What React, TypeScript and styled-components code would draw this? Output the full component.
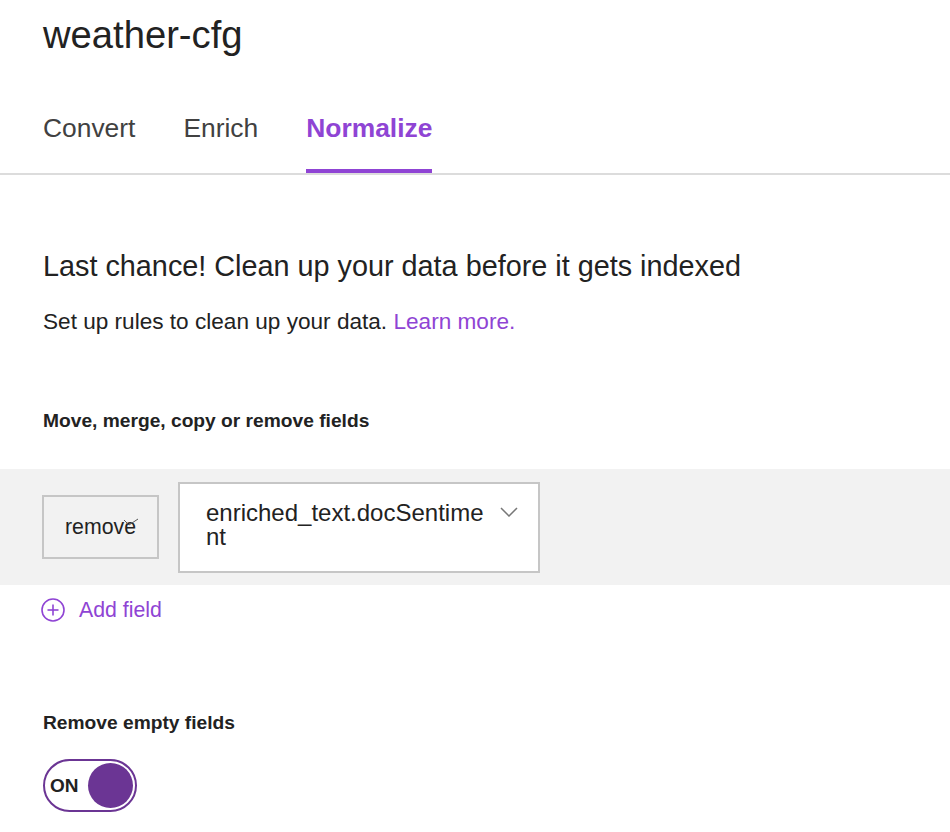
import React from "react";
import styled, { createGlobalStyle } from "styled-components";

const GlobalStyle = createGlobalStyle`
  html, body {
    margin: 0;
    padding: 0;
    background: #ffffff;
    font-family: "Liberation Sans", Arial, Helvetica, sans-serif;
    color: #222222;
  }
  * { box-sizing: border-box; }
`;

const PURPLE = "#8f44d4";
const DARK_PURPLE = "#6b3594";

const Page = styled.div`
  width: 950px;
  min-height: 832px;
  background: #ffffff;
  overflow: hidden;
`;

const Header = styled.header`
  padding: 13px 43px 0;
`;

const Title = styled.h1`
  margin: 0;
  font-size: 38.2px;
  line-height: 44px;
  font-weight: 400;
  color: #222222;
`;

const TabBar = styled.nav`
  display: flex;
  gap: 48px;
  margin-top: 56px;
  padding: 0 43px;
  border-bottom: 2px solid #dcdcdc;
`;

const Tab = styled.div<{ $active?: boolean }>`
  font-size: 26.4px;
  line-height: 30px;
  padding-bottom: 26px;
  border-bottom: 4px solid ${(p) => (p.$active ? PURPLE : "transparent")};
  color: ${(p) => (p.$active ? PURPLE : "#414141")};
  font-weight: ${(p) => (p.$active ? 700 : 400)};
  white-space: nowrap;
`;

const Content = styled.section`
  padding: 0 43px;
`;

const Heading = styled.h2`
  margin: 74px 0 0;
  font-size: 28.8px;
  line-height: 34px;
  font-weight: 400;
  color: #222222;
`;

const Lead = styled.p`
  margin: 25px 0 0;
  font-size: 22.6px;
  line-height: 28px;
  color: #222222;
`;

const Link = styled.a`
  color: ${PURPLE};
  text-decoration: none;
`;

const Label = styled.div<{ $top: number }>`
  margin-top: ${(p) => p.$top}px;
  font-size: 19.2px;
  line-height: 24px;
  font-weight: 700;
  color: #222222;
`;

const RuleBand = styled.div`
  margin-top: 36px;
  height: 116px;
  background: #f2f2f2;
  display: flex;
  align-items: center;
  gap: 19px;
  padding: 0 42px;
`;

const ActionBox = styled.div`
  position: relative;
  width: 117px;
  height: 64px;
  border: 2px solid #c6c6c6;
  background: #f2f2f2;
  display: flex;
  align-items: center;
  justify-content: center;
  font-size: 21.3px;
  color: #222222;
`;

const ActionTick = styled.svg`
  position: absolute;
  left: 79px;
  top: 21px;
`;

const FieldSelect = styled.div`
  width: 362px;
  height: 91px;
  border: 2px solid #c6c6c6;
  background: #ffffff;
  display: flex;
  align-items: flex-start;
  gap: 10px;
  padding: 17px 20px 0 26px;
`;

const FieldText = styled.div`
  width: 284px;
  font-size: 24px;
  line-height: 24px;
  color: #222222;
  word-break: break-all;
`;

const Chevron = styled.svg`
  margin-top: 6px;
  flex: none;
`;

const AddRow = styled.div`
  display: flex;
  align-items: center;
  gap: 14px;
  margin-top: 13px;
  padding-left: 41px;
  color: ${PURPLE};
  font-size: 21.3px;
  line-height: 24px;
`;

const Toggle = styled.div`
  margin-top: 24px;
  width: 94px;
  height: 53px;
  border: 2px solid ${DARK_PURPLE};
  border-radius: 27px;
  background: #ffffff;
  display: flex;
  align-items: center;
  justify-content: space-between;
  padding: 0 2px 0 5px;
`;

const ToggleText = styled.span`
  font-size: 19px;
  font-weight: 700;
  color: #222222;
`;

const Knob = styled.span`
  width: 45px;
  height: 45px;
  border-radius: 50%;
  background: ${DARK_PURPLE};
`;

export default function App() {
  return (
    <Page>
      <GlobalStyle />
      <Header>
        <Title>weather-cfg</Title>
      </Header>
      <TabBar>
        <Tab>Convert</Tab>
        <Tab>Enrich</Tab>
        <Tab $active>Normalize</Tab>
      </TabBar>
      <Content>
        <Heading>Last chance! Clean up your data before it gets indexed</Heading>
        <Lead>
          Set up rules to clean up your data. <Link href="#">Learn more.</Link>
        </Lead>
        <Label $top={73}>Move, merge, copy or remove fields</Label>
      </Content>
      <RuleBand>
        <ActionBox>
          remove
          <ActionTick width="16" height="8" viewBox="0 0 16 8">
            <polyline points="1,2 6,7 15,1" fill="none" stroke="#555" strokeWidth="1" />
          </ActionTick>
        </ActionBox>
        <FieldSelect>
          <FieldText>enriched_text.docSentiment</FieldText>
          <Chevron width="18" height="10" viewBox="0 0 18 10">
            <polyline points="1,1 9,9 17,1" fill="none" stroke="#777" strokeWidth="1.5" />
          </Chevron>
        </FieldSelect>
      </RuleBand>
      <AddRow>
        <svg width="24" height="24" viewBox="0 0 24 24">
          <circle cx="12" cy="12" r="11" fill="none" stroke={PURPLE} strokeWidth="1.6" />
          <line x1="12" y1="6.5" x2="12" y2="17.5" stroke={PURPLE} strokeWidth="1.6" />
          <line x1="6.5" y1="12" x2="17.5" y2="12" stroke={PURPLE} strokeWidth="1.6" />
        </svg>
        <span>Add field</span>
      </AddRow>
      <Content>
        <Label $top={89}>Remove empty fields</Label>
        <Toggle>
          <ToggleText>ON</ToggleText>
          <Knob />
        </Toggle>
      </Content>
    </Page>
  );
}
